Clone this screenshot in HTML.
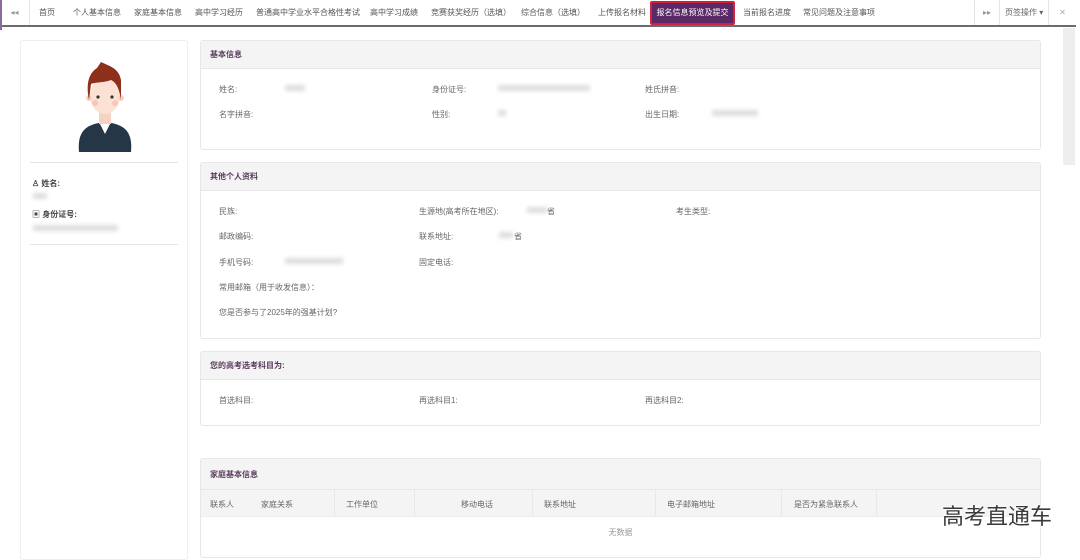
<!DOCTYPE html>
<html><head><meta charset="utf-8"><style>
*{margin:0;padding:0;box-sizing:border-box}
body{width:1080px;height:553px;overflow:hidden;background:#fff;font-family:"Liberation Sans","Noto Sans CJK SC",sans-serif;font-size:8px;color:#555;position:relative}
.a{position:absolute;white-space:nowrap}
.nav{position:absolute;left:0;top:0;width:1076px;height:27px;background:#fff;border-bottom:2px solid #6a6a72}
.tab{position:absolute;top:0;height:25px;line-height:25px;font-size:8px;color:#555}
.card{position:absolute;left:200px;width:841px;border:1px solid #e7e7e7;border-radius:3px;background:#fff}
.hd{height:28px;line-height:28px;background:#f4f4f4;border-bottom:1px solid #e7e7e7;padding-left:9px;font-size:8px;color:#5a3a5c;font-weight:bold}
.lb{position:absolute;font-size:8px;color:#666;white-space:nowrap}
.blur{position:absolute;background:#ddd;filter:blur(2px);height:6px}
.sep{position:absolute;top:0;width:1px;height:27px;background:#e8e8e8}
</style></head><body>
<div class="nav">
 <div class="a" style="left:0;top:0;width:30px;height:25px;border-right:1px solid #e5e5e5;text-align:center;line-height:25px;color:#999;font-size:8px">◂◂</div>
 <div class="tab" style="left:39px">首页</div>
 <div class="tab" style="left:73px">个人基本信息</div>
 <div class="tab" style="left:134px">家庭基本信息</div>
 <div class="tab" style="left:195px">高中学习经历</div>
 <div class="tab" style="left:256px">普通高中学业水平合格性考试</div>
 <div class="tab" style="left:370px">高中学习成绩</div>
 <div class="tab" style="left:431px">竞赛获奖经历（选填）</div>
 <div class="tab" style="left:521px">综合信息（选填）</div>
 <div class="tab" style="left:598px">上传报名材料</div>
 <div class="a" style="left:650px;top:1px;width:85px;height:24px;background:#5b2a66;border:2px solid #d0223a;border-radius:2px;color:#fff;font-size:8px;line-height:20px;text-align:center">报名信息预览及提交</div>
 <div class="tab" style="left:743px">当前报名进度</div>
 <div class="tab" style="left:803px">常见问题及注意事项</div>
 <div class="a" style="left:974px;top:0;width:26px;height:25px;border-left:1px solid #e5e5e5;border-right:1px solid #e5e5e5;text-align:center;line-height:25px;color:#999">▸▸</div>
 <div class="tab" style="left:1005px;color:#666">页签操作 ▾</div>
 <div class="a" style="left:1048px;top:0;width:28px;height:25px;border-left:1px solid #e5e5e5;text-align:center;line-height:25px;color:#aaa">✕</div>
</div>
<div class="a" style="left:0;top:0;width:2px;height:30px;background:#8a6a9a"></div>
<div class="a" style="left:1063px;top:28px;width:12px;height:137px;background:#eee"></div>

<div class="a" style="left:20px;top:40px;width:168px;height:520px;border:1px solid #eee;border-radius:3px"></div>
<svg class="a" style="left:75px;top:60px" width="60" height="95" viewBox="0 0 60 95">
 <path d="M4 92 C2 70 12 64 30 62 C48 64 58 70 56 92 Z" fill="#253746"/>
 <path d="M24 62 L30 74 L36 62 Z" fill="#fff"/>
 <rect x="24" y="48" width="12" height="16" fill="#f6d3c0"/>
 <ellipse cx="30" cy="36" rx="15" ry="18" fill="#fbe2d4"/>
 <circle cx="14" cy="38" r="3" fill="#f6d3c0"/><circle cx="46" cy="38" r="3" fill="#f6d3c0"/>
 <path d="M14 40 C10 20 16 12 22 8 L26 2 C34 6 44 8 46 20 L46 40 C44 26 40 22 36 20 C28 23 20 22 16 24 Z" fill="#8e2f1c"/>
 <circle cx="23" cy="37" r="1.6" fill="#333"/><circle cx="37" cy="37" r="1.6" fill="#333"/>
 <circle cx="20" cy="43" r="3" fill="#f7c8b8"/><circle cx="40" cy="43" r="3" fill="#f7c8b8"/>
</svg>
<div class="a" style="left:30px;top:162px;width:148px;height:1px;background:#e5e5e5"></div>
<div class="lb" style="left:32px;top:178px;color:#444;font-weight:bold">♙ 姓名:</div>
<div class="blur" style="left:33px;top:193px;width:14px"></div>
<div class="lb" style="left:32px;top:209px;color:#444;font-weight:bold">▣ 身份证号:</div>
<div class="blur" style="left:33px;top:225px;width:85px"></div>
<div class="a" style="left:30px;top:244px;width:148px;height:1px;background:#e5e5e5"></div>

<div class="card" style="top:40px;height:110px"><div class="hd">基本信息</div></div>
<div class="lb" style="left:219px;top:84px">姓名:</div><div class="blur" style="left:285px;top:85px;width:20px"></div>
<div class="lb" style="left:432px;top:84px">身份证号:</div><div class="blur" style="left:498px;top:85px;width:92px"></div>
<div class="lb" style="left:645px;top:84px">姓氏拼音:</div>
<div class="lb" style="left:219px;top:109px">名字拼音:</div>
<div class="lb" style="left:432px;top:109px">性别:</div><div class="blur" style="left:498px;top:110px;width:8px"></div>
<div class="lb" style="left:645px;top:109px">出生日期:</div><div class="blur" style="left:712px;top:110px;width:46px"></div>

<div class="card" style="top:162px;height:177px"><div class="hd">其他个人资料</div></div>
<div class="lb" style="left:219px;top:206px">民族:</div>
<div class="lb" style="left:419px;top:206px">生源地(高考所在地区):</div><div class="blur" style="left:527px;top:207px;width:20px"></div><div class="lb" style="left:547px;top:206px">省</div>
<div class="lb" style="left:676px;top:206px">考生类型:</div>
<div class="lb" style="left:219px;top:231px">邮政编码:</div>
<div class="lb" style="left:419px;top:231px">联系地址:</div><div class="blur" style="left:499px;top:232px;width:14px"></div><div class="lb" style="left:514px;top:231px">省</div>
<div class="lb" style="left:219px;top:257px">手机号码:</div><div class="blur" style="left:285px;top:258px;width:58px"></div>
<div class="lb" style="left:419px;top:257px">固定电话:</div>
<div class="lb" style="left:219px;top:282px">常用邮箱（用于收发信息）：</div>
<div class="lb" style="left:219px;top:307px">您是否参与了2025年的强基计划?</div>

<div class="card" style="top:351px;height:75px"><div class="hd">您的高考选考科目为:</div></div>
<div class="lb" style="left:219px;top:395px">首选科目:</div>
<div class="lb" style="left:419px;top:395px">再选科目1:</div>
<div class="lb" style="left:645px;top:395px">再选科目2:</div>

<div class="card" style="top:458px;height:100px"><div class="hd" style="height:31px;line-height:31px">家庭基本信息</div>
 <div style="height:27px;background:#f4f4f4;position:relative;border-bottom:1px solid #eee">
  <span class="lb" style="left:9px;top:9px">联系人</span>
  <span class="lb" style="left:60px;top:9px">家庭关系</span>
  <span class="lb" style="left:145px;top:9px">工作单位</span>
  <span class="lb" style="left:260px;top:9px">移动电话</span>
  <span class="lb" style="left:343px;top:9px">联系地址</span>
  <span class="lb" style="left:466px;top:9px">电子邮箱地址</span>
  <span class="lb" style="left:593px;top:9px">是否为紧急联系人</span>
  <i class="sep" style="left:133px"></i><i class="sep" style="left:213px"></i><i class="sep" style="left:331px"></i><i class="sep" style="left:454px"></i><i class="sep" style="left:580px"></i><i class="sep" style="left:675px"></i>
 </div>
 <div style="text-align:center;color:#999;line-height:32px">无数据</div>
</div>
<div class="a" style="left:942px;top:499px;font-size:22px;color:#3a3a3a;text-shadow:0 0 3px #fff,0 0 3px #fff">高考直通车</div>
</body></html>
